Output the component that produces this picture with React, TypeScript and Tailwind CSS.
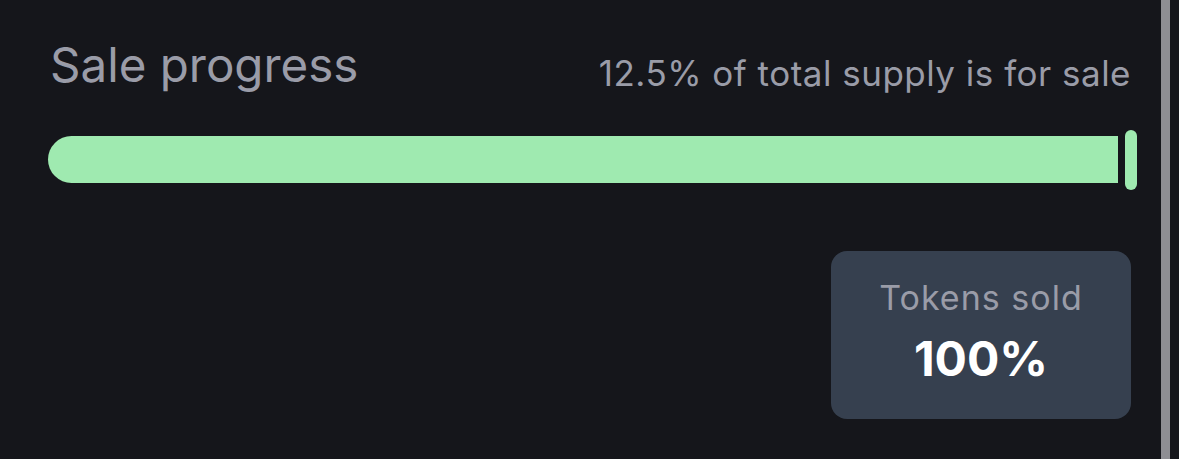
export default function App() {
  return (
    <div className="flex h-[459px] w-[1179px] overflow-hidden bg-[#15161b] font-['Inter',sans-serif]">
      <main className="flex w-[1161px] flex-col pl-[48px] pr-[30px] pt-[41px]">
        <div className="flex h-[48px] items-start justify-between">
          <h2 className="pl-[2px] text-[47.5px] leading-none font-normal text-[#9a9ca8]">Sale progress</h2>
          <p className="mt-[15px] text-[35px] leading-none tracking-[0.014em] text-[#9a9ca8]">
            12.5% of total supply is for sale
          </p>
        </div>

        <div className="mt-[41px] mr-[-6px] flex h-[60px] items-start gap-[7px]">
          <div className="mt-[6px] h-[47px] flex-1 rounded-l-full rounded-r-[8px] bg-[#9feab0]" />
          <div className="h-[60px] w-[12px] rounded-full bg-[#9feab0]" />
        </div>

        <div className="mt-[61px] flex justify-end">
          <div className="flex h-[168px] w-[300px] flex-col items-center rounded-[16px] bg-[#36404f] pt-[30px]">
            <div className="text-[34px] leading-none tracking-[0.03em] text-[#9a9ca8]">Tokens sold</div>
            <div className="mt-[20px] text-[48px] leading-none font-bold text-white">100%</div>
          </div>
        </div>
      </main>
      <div className="h-full w-[9px] bg-[#8e8e93]" />
    </div>
  );
}
